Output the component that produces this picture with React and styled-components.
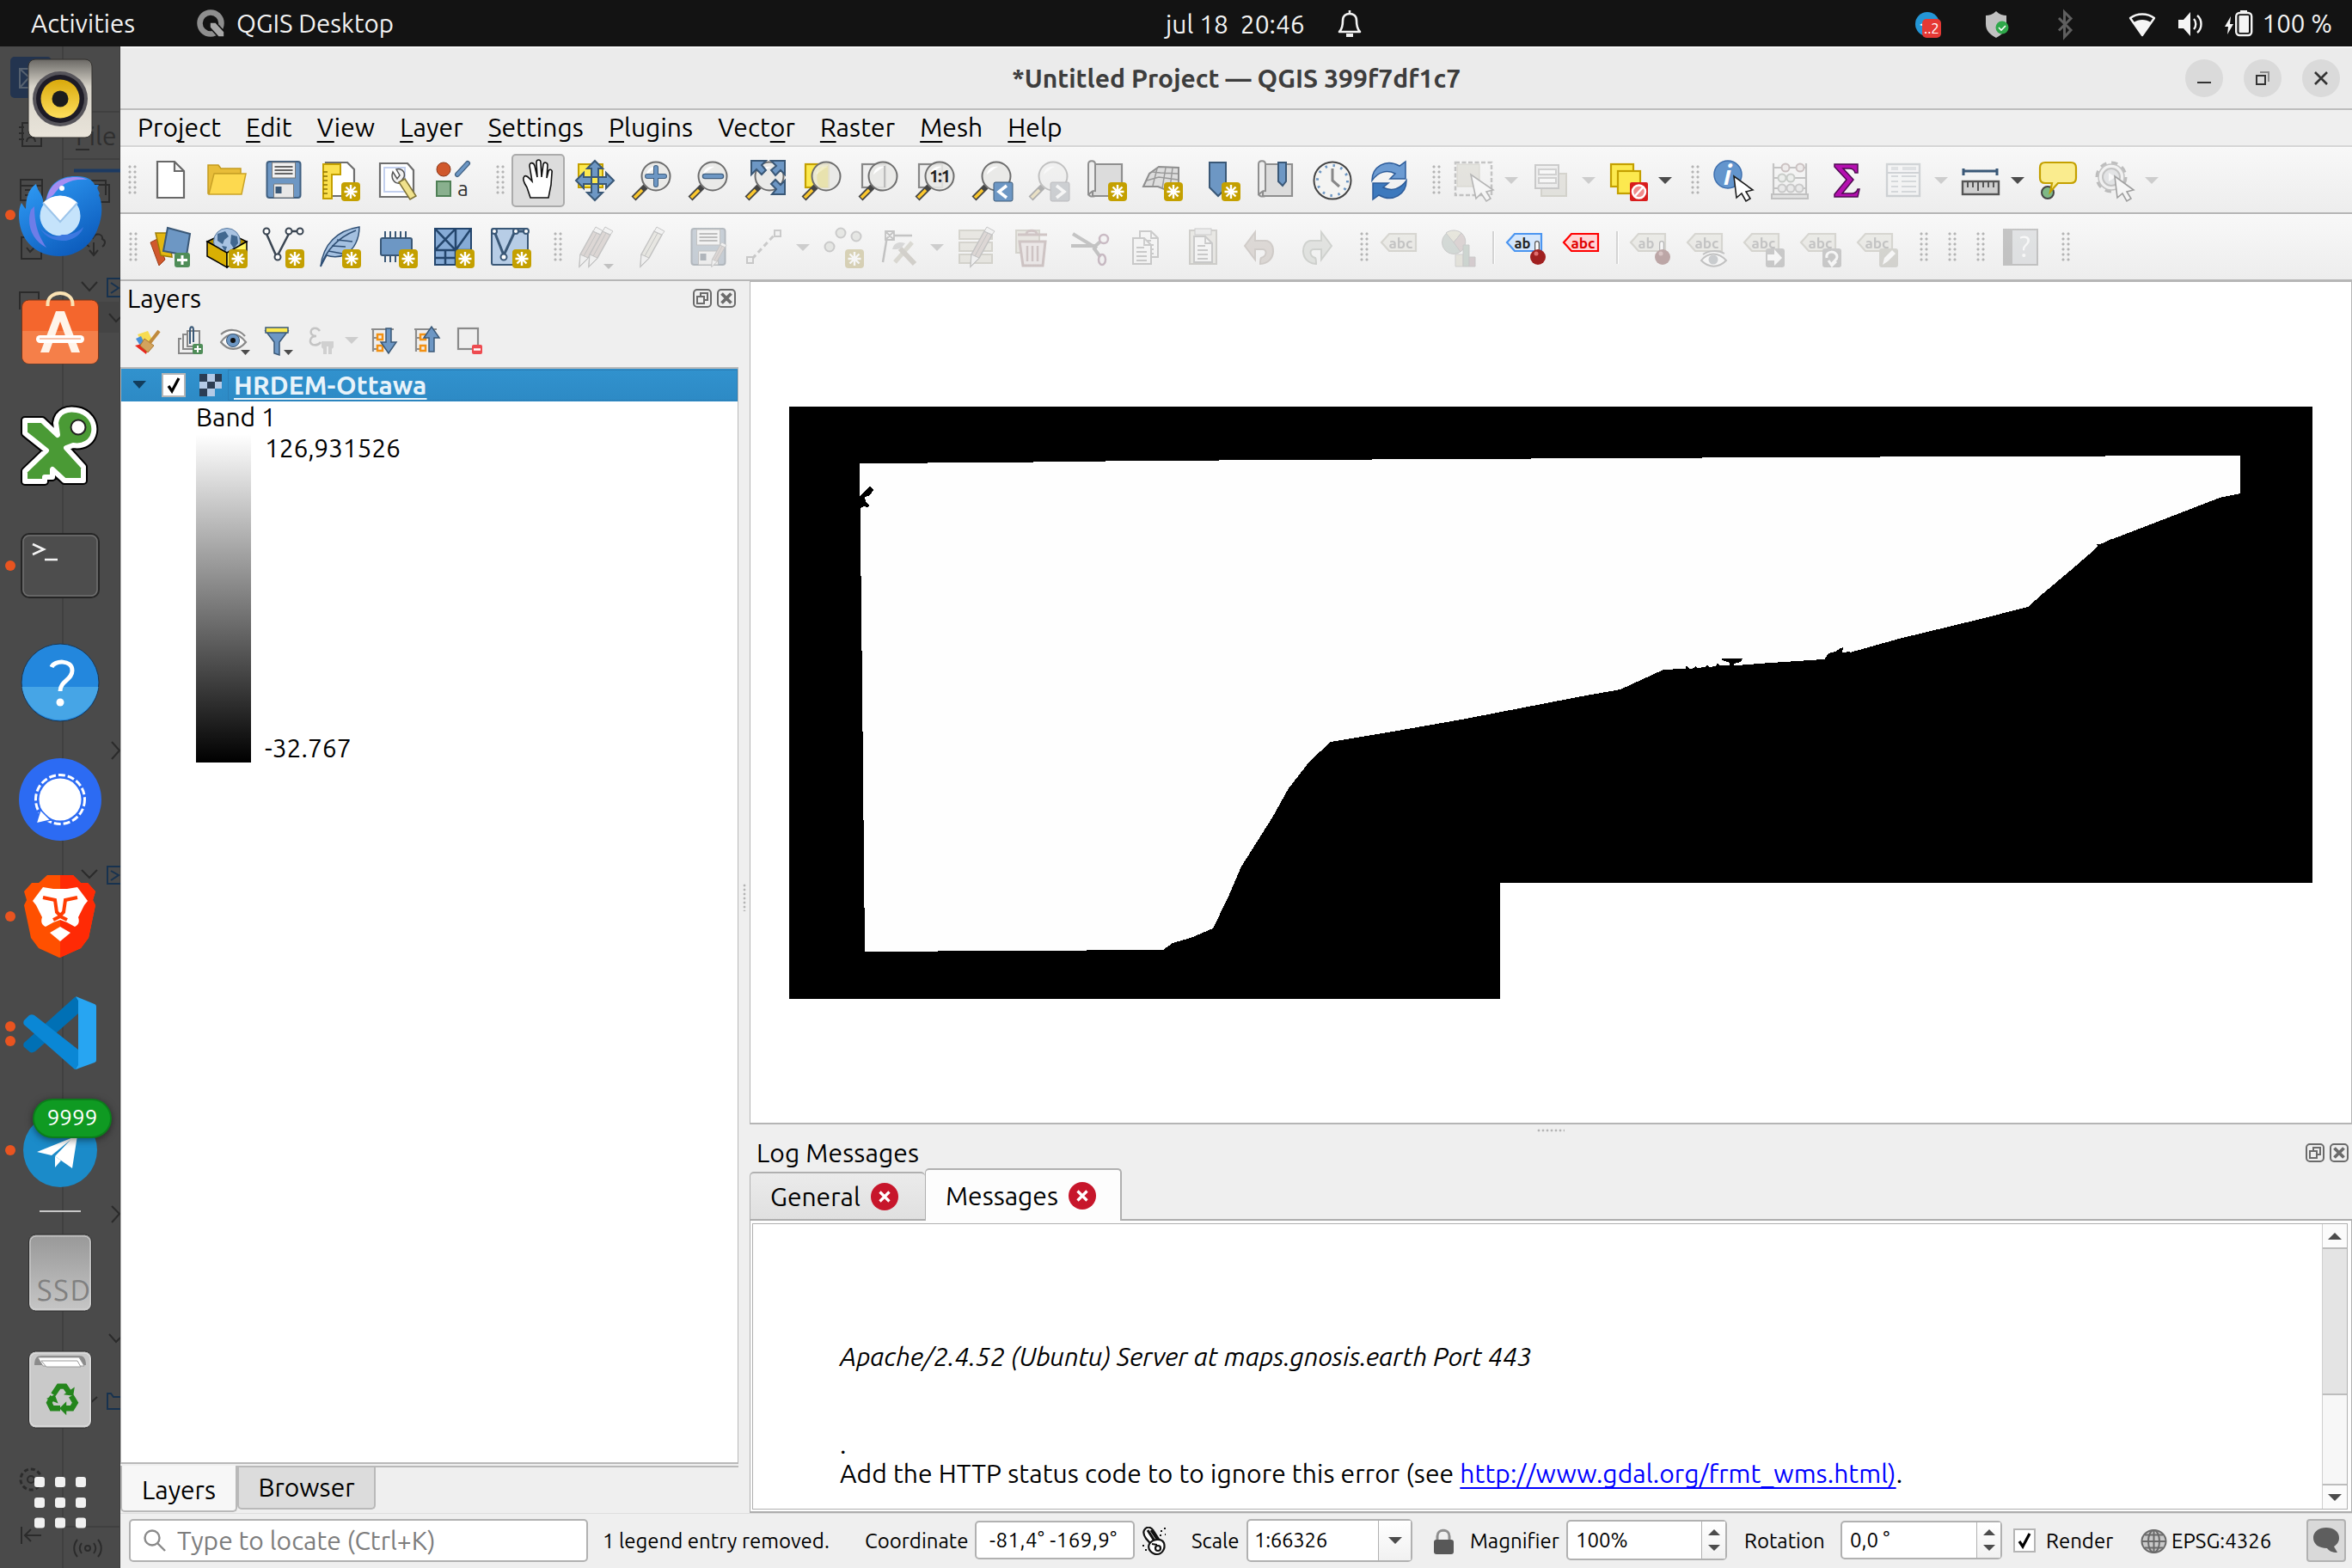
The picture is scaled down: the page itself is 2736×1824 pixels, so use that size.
import React from 'react';
import styled, { createGlobalStyle } from 'styled-components';

const Global = createGlobalStyle`
  * { box-sizing: border-box; }
  html, body { margin: 0; padding: 0; background: #efefef; overflow: hidden; }
  body, text { font-family: Ubuntu, "Open Sans", "Noto Sans", sans-serif; }
  svg { display: block; flex: none; }
`;

/* ---------- shared ---------- */
const Text = styled.span`
  font-size: ${(p) => p.$size || 30}px;
  line-height: 36px;
  letter-spacing: ${(p) => p.$ls || 0}px;
  font-weight: ${(p) => (p.$bold ? 700 : 400)};
  font-style: ${(p) => (p.$italic ? 'italic' : 'normal')};
  color: ${(p) => p.$color || '#000'};
  white-space: pre;
  flex: none;
  u { text-decoration-thickness: 2px; text-underline-offset: 5px; text-decoration-skip-ink: none; }
`;
const Screen = styled.div`
  width: 2736px; height: 1824px; display: flex; flex-direction: column; overflow: hidden;
`;
const Body = styled.div`flex: 1; display: flex; min-height: 0;`;

/* ---------- top bar ---------- */
const TopBar = styled.header`
  height: 54px; background: #131313; display: grid; grid-template-columns: 1356px 1fr auto;
  align-items: center; padding-top: 1px;
`;
const TopLeft = styled.div`display: flex; align-items: center; padding-left: 36px;`;
const TopMid = styled.div`display: flex; align-items: center; gap: 37px;`;
const TopRight = styled.div`display: flex; align-items: center; padding-right: 23px;`;
const AppMenu = styled.div`display: flex; align-items: center; gap: 13px; margin-left: 72px;`;

const Topbar = () => (
  <TopBar>
    <TopLeft>
      <Text $size={29.500} $color="#f2f2f2">Activities</Text>
      <AppMenu>
        <svg width="33" height="33" viewBox="0 0 33 33">
          <circle cx="16" cy="16" r="12.5" fill="none" stroke="#8e8e8e" strokeWidth="6.5" />
          <path d="M15 15h7l10 11v6h-7L15 21z" fill="#a8a8a8" stroke="#131313" strokeWidth="1.6" />
        </svg>
        <Text $size={29.500} $color="#f2f2f2">QGIS Desktop</Text>
      </AppMenu>
    </TopLeft>
    <TopMid>
      <Text $color="#f2f2f2">jul 18  20:46</Text>
      <svg width="30" height="34" viewBox="0 0 30 34" fill="none" stroke="#f2f2f2" strokeWidth="2.6">
        <path d="M3 26h24c-3-3-4-6-4-13 0-6-4-8-8-8s-8 2-8 8c0 7-1 10-4 13zM15 1v4" strokeLinejoin="round" />
        <path d="M11 30h8" strokeWidth="4" />
      </svg>
    </TopMid>
    <TopRight>
      <svg width="404" height="40" viewBox="2228 7 404 40">
        <circle cx="2242" cy="27" r="14" fill="#2496d6" />
        <path d="M2233 28l9-5-3 7z" fill="#fff" />
        <rect x="2236" y="21" width="22" height="22" rx="5" fill="#e53935" />
        <text x="2238" y="38" fontSize="17" fill="#fff">..2</text>
        <path d="M2322 12c4 4 8 5 12 5v10c0 8-5 12-12 16-7-4-12-8-12-16V17c4 0 8-1 12-5z" fill="#c1c1c1" />
        <circle cx="2329" cy="31" r="7.5" fill="#2fa84a" />
        <path d="M2325 31l3 3 5-5" fill="none" stroke="#fff" strokeWidth="1.6" />
        <path d="M2395 20l14 14-7.5 8V13l7.5 7.5-14 14" fill="none" stroke="#5f5f5f" strokeWidth="3" />
        <path d="M2478 20c8-6 20-6 28 0l-14 20z" fill="none" stroke="#f5f5f5" strokeWidth="2.4" strokeLinejoin="round" />
        <path d="M2482 25c6-4 14-4 20 0l-10 15z" fill="#f5f5f5" />
        <path d="M2534 22h6l8-9v28l-8-9h-6z" fill="#f5f5f5" />
        <path d="M2552 21c3 3 3 9 0 12M2556 17c6 5 6 15 0 20" fill="none" stroke="#f5f5f5" strokeWidth="2.4" />
        <path d="M2595 18l-7 12h4l-1 9 7-12h-4z" fill="#f5f5f5" />
        <rect x="2601.2" y="14" width="18" height="26" rx="4" fill="none" stroke="#f5f5f5" strokeWidth="2.4" />
        <rect x="2604.5" y="17" width="11.5" height="20" rx="1" fill="#f5f5f5" />
        <rect x="2606" y="11" width="8" height="3" fill="#f5f5f5" />
      </svg>
      <Text $size={29.500} $color="#f2f2f2">100 %</Text>
    </TopRight>
  </TopBar>
);

/* ---------- dock ---------- */
const DockBar = styled.nav`
  width: 140px; background: #4a4a4a; position: relative; display: flex; flex-direction: column; flex: none;
  border-right: 1px solid #3e3e3e;
`;
const Backdrop = styled.svg`position: absolute; left: 0; top: 0;`;
const DockItem = styled.div`
  position: relative; width: 140px; height: ${(p) => p.$h || 136}px; flex: none;
  display: flex; align-items: flex-end;
`;
const Dots = styled.div`
  position: absolute; left: 6px; top: 0; bottom: 0; display: flex; flex-direction: column;
  justify-content: center; gap: 5px;
`;
const Dot = styled.i`width: 12px; height: 12px; border-radius: 50%; background: #e95420;`;
const DockRule = styled.hr`width: 48px; height: 2px; margin: 2px 46px; border: 0; background: #c8c8c8; position: relative; flex: none;`;
const Count = styled.span`
  position: absolute; left: 38px; top: 8px; width: 92px; height: 46px; border-radius: 23px;
  background: #0f9a22; border: 2px solid #0b7d1b; color: #fff; font-size: 26px; line-height: 40px;
  text-align: center; box-shadow: 0 2px 8px rgba(0,0,0,.5);
`;

const dockIcons = [
  { dots: 0, art: <>
    <defs><linearGradient id="rb" x2="0" y2="1"><stop offset="0" stopColor="#6a6864" /><stop offset=".35" stopColor="#d8d4ca" /><stop offset="1" stopColor="#e9e4da" /></linearGradient>
      <linearGradient id="rby" x2="0" y2="1"><stop offset="0" stopColor="#d9a90c" /><stop offset="1" stopColor="#ffdf5c" /></linearGradient></defs>
    <rect x="33" y="23" width="74" height="91" rx="8" fill="url(#rb)" stroke="#33312e" strokeWidth="1" />
    <circle cx="70" cy="69" r="32" fill="#56545a" /><circle cx="70" cy="69" r="28" fill="#1d1b26" />
    <circle cx="70" cy="69" r="22.5" fill="url(#rby)" /><circle cx="70" cy="69" r="9.5" fill="#1c1c1c" />
  </> },
  { dots: 1, art: <>
    <defs><linearGradient id="tb" x1=".2" x2=".8" y2="1"><stop offset="0" stopColor="#2f9bf5" /><stop offset="1" stopColor="#0a57b8" /></linearGradient></defs>
    <path d="M54 48C58 30 72 22 90 23c10 0 18 4 20 10h5c-2 3-2 4-1 6l2 4-1 2c5 10 4 26-1 38-7 20-24 33-45 33C42 116 22 98 22 68c0-6 1-10 3-14 2 3 3 5 5 7 0-14 4-24 12-29 2 10 10 13 8 25z" fill="url(#tb)" />
    <path d="M54 50C58 32 70 24 88 24c6 0 10 1 14 3-20-2-32 6-40 18z" fill="#a48df2" />
    <path d="M36 62c-6 18 2 36 18 44-8-12-14-24-14-48z" fill="#6d7de8" />
    <circle cx="70" cy="69" r="23.5" fill="#c5e3fb" /><path d="M50 54l20 22 20-22c-10-11-30-11-40 0z" fill="#fff" />
    <path d="M50 54l20 22 20-22" fill="none" stroke="#9cc4ea" strokeWidth="2" />
    <path d="M47 84c8 14 22 14 30 14 10-2 18-8 20-16-8 8-16 9-25 9-6 4-16 2-25-7z" fill="#3d78e0" />
    <circle cx="72" cy="37" r="3" fill="#fff" />
  </> },
  { dots: 0, art: <>
    <rect x="25.500" y="31" width="89" height="74" rx="8" fill="#f4662d" stroke="#7a3519" /><path d="M26 67h88v30a8 8 0 0 1-8 8H34a8 8 0 0 1-8-8z" fill="#f57f49" />
    <path d="M55.500 38v-3c1-16 28-16 29 0v3" fill="none" stroke="#fbe3b4" strokeWidth="4" />
    <path d="M65 44h10l18 48H83L70 56 57 92H47z" fill="#fff4ea" /><rect x="42" y="72" width="56" height="9" rx="4.500" fill="#fff" /><path d="M46 76h48" stroke="#f3b193" strokeWidth="1.500" />
  </> },
  { dots: 0, art: <>
    <g transform="translate(23 20)">
      <path d="M6 15h20l18 17-2-14C44 4 56 1 66 3c14 2 22 14 20 26C84 40 74 46 62 44l-8 3 20 22v16H52L38 72v9h-9v5H6V74l25-24L6 30z" fill="#fff" stroke="#000" strokeWidth="10" strokeLinejoin="round" />
      <path d="M6 15h20l18 17-2-14C44 4 56 1 66 3c14 2 22 14 20 26C84 40 74 46 62 44l-8 3 20 22v16H52L38 72v9h-9v5H6V74l25-24L6 30z" fill="#4a9a35" stroke="#fff" strokeWidth="6" strokeLinejoin="round" />
      <circle cx="68" cy="23" r="8.500" fill="#fff" stroke="#222" strokeWidth="2" />
    </g>
  </> },
  { dots: 1, art: <>
    <rect x="25" y="31" width="90" height="74" rx="9" fill="#4d4d4d" stroke="#252525" strokeWidth="2" /><rect x="27" y="33" width="86" height="70" rx="7" fill="none" stroke="#6e6e6e" strokeWidth="1.500" />
    <path d="M38 43l13 6-13 6M52 61h15" fill="none" stroke="#f4f4f4" strokeWidth="2.500" />
  </> },
  { dots: 0, art: <>
    <circle cx="70" cy="68" r="45" fill="#2387dd" stroke="#1a3550" /><path d="M25.500 73a45 45 0 0 0 89 0z" fill="#46a5e6" />
    <path d="M60 50c3-8 24-9 24 4 0 11-14 12-14 24" fill="none" stroke="#fff" strokeWidth="5" /><circle cx="70" cy="91" r="4.500" fill="#fff" />
  </> },
  { dots: 0, art: <>
    <circle cx="70" cy="68" r="48" fill="#2c6bf3" /><circle cx="70" cy="68" r="28.500" fill="none" stroke="#fff" strokeWidth="3" strokeDasharray="8 3" />
    <circle cx="70" cy="68" r="24.500" fill="#fff" /><path d="M47 80l-5 16 17-4z" fill="#fff" stroke="#2c6bf3" strokeWidth="1.500" />
  </> },
  { dots: 1, art: <>
    <path d="M55 20h30l9 9h8l9 10-3 10 3 6-8 38-9 12-25 11-24-11-9-12-8-38 3-6-3-10 9-10h8z" fill="#ff5000" /><path d="M70 20h15l9 9h8l9 10-3 10 3 6-8 38-9 12-24 11z" fill="#ff2a05" />
    <path d="M50 34l12 2h16l12-2 12 16-4 5-7 14c2 6 0 9-4 11l-9-5-8-3-8 3-9 5c-4-2-6-5-4-11l-7-14-4-5z" fill="#fff" />
    <path d="M50 46l14 3 2 14 4 4 4-4 2-14 14-3M62 72l8-4 8 4" fill="none" stroke="#ff3d03" strokeWidth="4" /><path d="M58 87l12-7 12 7-12 10z" fill="#fff" />
  </> },
  { dots: 2, art: <>
    <path d="M28 84l7 6c2 1 4 0 6-1l50-44V26L87 26 28 79c-1 1-1 4 0 5z" fill="#0070b5" /><path d="M28 53l6-6c2-1 4-1 6 0l51 40v22l-4 1L28 58c-1-1-1-4 0-5z" fill="#0a87d5" />
    <path d="M88 25l22 9c2 1 2 2 2 4v60c0 2 0 3-2 4l-22 8 3-5V30z" fill="#27a5f2" />
  </> },
  { dots: 1, count: '9999', art: <>
    <circle cx="70" cy="68" r="43" fill="#1b8bc9" /><path d="M43 70l47-19-6 38-20-14 18-19-22 18z" fill="#fff" /><path d="M64 75v13l7-8z" fill="#fff" />
  </> },
];

const DockArt = ({ h = 136, children }) => (
  <svg width="140" height={h} viewBox={`0 ${136 - h} 140 ${h}`}>{children}</svg>
);

const Dock = () => (
  <DockBar>
    <Backdrop width="140" height="1770" viewBox="0 54 140 1770" fill="none" stroke="#2b2b2b" strokeWidth="2">
      <path d="M73 54v1770" stroke="#404040" strokeWidth="2" />
      <rect x="74" y="351" width="66" height="36" fill="#444" stroke="none" />
      <path d="M74 130h66M74 185h66M74 1776h66" stroke="#404040" />
      <rect x="12" y="66" width="48" height="48" rx="5" fill="#23344f" stroke="none" />
      <path d="M23 80h26v22H23zM23 80l13 12 13-12M23 102l10-11M49 102l-10-11" stroke="#56616f" />
      <text x="88" y="169" fontSize="30" fill="#2f2f2f" stroke="none">File</text>
      <path d="M88 174h16" />
      <path d="M86 198.500h54" stroke="#1c3a62" strokeWidth="4" />
      <path d="M26 143h22v27H26zM22 148h6M22 155h6M22 162h6M31 165c0-7 10-7 10 0" />
      <path d="M24 209h25v24H24zM24 216h25M29 221h16M29 227h12" />
      <path d="M25 276h23v25H25zM31 288l4 5 8-8" />
      <path d="M23 360v-20h22v8M30 350h20v14H30" />
      <path d="M106 210h17v17M110 215h17v20h-18" />
      <path d="M104 287c-7-4-2-12 4-10 4-8 12-4 11 1 5 2 3 7 0 9M109 282v14M104 291l5 6 5-6" />
      <path d="M95 328l9 10 9-10M127 365l8 9 5-5M130 863l9 10-9 10M95 1012l9 9 9-9M130 1403l9 9-9 10M127 1552l8 9 5-5M104 1633l9-8" />
      <path d="M140 324h-15v21h15M129 329l9 6-9 6M140 1008h-15v20h15M129 1013l9 5-9 6M140 1625h-8l-3-4h-4v18h15" stroke="#17324f" />
      <circle cx="36" cy="1721" r="12" strokeDasharray="5 3" strokeWidth="3" /><circle cx="36" cy="1721" r="4" />
      <path d="M25 1776v20M29 1786h19M36 1779l-7 7 7 7" />
      <circle cx="102" cy="1801" r="3" /><path d="M95 1795c-3 4-3 8 0 12M109 1795c3 4 3 8 0 12M90 1791c-5 6-5 14 0 20M114 1791c5 6 5 14 0 20" />
    </Backdrop>
    {dockIcons.map((d, i) => (
      <DockItem key={i} $h={i === 0 ? 128 : 136}>
        <DockArt h={i === 0 ? 128 : 136}>{d.art}</DockArt>
        {d.dots > 0 && <Dots>{Array.from({ length: d.dots }, (_, k) => <Dot key={k} />)}</Dots>}
        {d.count && <Count>{d.count}</Count>}
      </DockItem>
    ))}
    <DockRule />
    <DockItem><DockArt>
      <defs><linearGradient id="ssd" x2="0" y2="1"><stop offset="0" stopColor="#989898" /><stop offset="1" stopColor="#c6c6c6" /></linearGradient></defs>
      <rect x="33.500" y="24" width="73" height="89" rx="8" fill="url(#ssd)" stroke="#2c2c2c" /><rect x="35" y="26" width="70" height="85" rx="7" fill="none" stroke="#d4d4d4" />
      <text x="43" y="101" fontSize="33" fill="#808080" textLength="62">SSD</text>
    </DockArt></DockItem>
    <DockItem><DockArt>
      <rect x="33.500" y="24" width="73" height="89" rx="8" fill="#c9c9c9" stroke="#2c2c2c" /><rect x="35" y="26" width="70" height="85" rx="7" fill="none" stroke="#e4e4e4" />
      <path d="M40 40c0-8 3-11 8-11h44c5 0 8 3 8 11z" fill="#8b8b8b" /><path d="M44 31h48l6 10H50z" fill="#fff" stroke="#999" /><path d="M48 35h42l4 7H54z" fill="#fff" stroke="#999" />
      <g transform="translate(70 79) scale(.8) translate(-68 -80)">
        <g fill="none" stroke="#24851c" strokeWidth="8"><path d="M58 74l8-12h9l6 9M84 76l6 10-5 8H75M68 94H56l-4-8 5-9" /></g>
        <path d="M73 74l14 2 2-13zM77 84v20l-10-10zM48 80l12-6 5 13z" fill="#24851c" />
      </g>
    </DockArt></DockItem>
    <DockItem><DockArt>
      {[34, 58, 81.500].map((y) => [40, 64, 88].map((x) => <rect key={`${x}-${y}`} x={x} y={y} width="12" height="12" rx="3" fill="#f1f1f1" />))}
    </DockArt></DockItem>
  </DockBar>
);

/* ---------- toolbar icons (48 x 48) ---------- */
const Star = ({ x = 26, y = 26 }) => (
  <g transform={`translate(${x} ${y})`}>
    <rect width="22" height="22" rx="4" fill="#c4a000" />
    <path d="M11 3v16M3.500 11h15M5.500 5.500l11 11M16.500 5.500l-11 11" stroke="#fff" strokeWidth="2.400" />
  </g>
);
const Lens = ({ children, back }) => (
  <>
    {back}
    <path d="M17 31L3 45" stroke="#444" strokeWidth="7" /><path d="M13 35L4 44" stroke="#fcc82d" strokeWidth="3.500" />
    <circle cx="29" cy="19" r="16.500" fill="#e8e8e6" fillOpacity=".88" stroke="#6e6e6e" strokeWidth="2" />
    <path d="M18 17c1-7 7-10 13-9-5 2-9 6-13 9z" fill="#fff" />
    {children}
  </>
);
const Tag = ({ c = '#aaa688', f = '#dedbc8', t = 'abc', tc = '#777' }) => (
  <>
    <path d="M1 19L10 9h31v20H10z" fill={f} stroke={c} strokeWidth="2.200" />
    <text x="9.500" y="25.500" fontSize="17" fontWeight="700" fontFamily="Liberation Sans" textLength={t.length > 2 ? 28 : 19} lengthAdjust="spacingAndGlyphs" fill={tc}>{t}</text>
  </>
);
const Pencil = ({ x = 0, c = '#c9a79a' }) => (
  <g transform={`translate(${x} 0)`}><path d="M12 32L27 5l9 4-15 27-10 10z" fill={c} stroke="#777" strokeWidth="1.500" /><path d="M27 5l3-5 9 5-3 4zM12 32l9 4-10 10z" fill="#eee" stroke="#777" /><path d="M16 34L31 7" stroke="#777" /></g>
);
const Cursor = () => <path d="M24 18l3 25 6-5 5 9 5-3-5-8 8-2z" transform="translate(0 1)" fill="#fff" stroke="#1d1d1d" strokeWidth="1.600" />;
const Pin = () => <><path d="M37 20v10" stroke="#555" strokeWidth="6" strokeLinecap="round" /><path d="M37 20v10" stroke="#fff" strokeWidth="3.500" strokeLinecap="round" /><circle cx="38" cy="36" r="9" fill="#a02020" /><circle cx="36" cy="32" r="2.500" fill="#e07070" /></>;
const Floppy = () => <g transform="translate(1.500 0)"><rect x="4" y="2" width="39" height="42" rx="3" fill="#6d97c4" stroke="#3f5f80" strokeWidth="2" /><rect x="10" y="3" width="27" height="18" fill="#f1f1f1" stroke="#777" /><path d="M13 8h21M13 12h21M13 16h21" stroke="#666" strokeWidth="1.800" /><rect x="12" y="28" width="23" height="16" rx="1" fill="#e8e8e8" stroke="#777" /><rect x="14" y="31" width="7" height="8" fill="#3a5877" /></g>;
const Page = () => <path d="M8 3h25l8 8v31H8z" fill="#fff" stroke="#6e6e6e" strokeWidth="2.200" />;
const Doc = ({ x, y }) => <g transform={`translate(${x} ${y})`}><path d="M1 1h13l8 8v22H1z" fill="#f6f6f6" stroke="#888" strokeWidth="2" /><path d="M14 1v8h8M5 12h9M5 17h12M5 22h12M5 27h12" fill="none" stroke="#888" strokeWidth="1.800" /></g>;
const Roll = () => <><path d="M8 5h34v37H8z" fill="#dcdcdc" stroke="#8f8f8f" strokeWidth="2.200" /><path d="M3 5c0-5 8-5 8 0v31c-4-1-5 3-8 4z" fill="#eee" stroke="#8f8f8f" strokeWidth="2" /><path d="M3 38c0 5 4 5 8 4" fill="none" stroke="#8f8f8f" strokeWidth="2" /></>;

const art = {
  newDoc: <path d="M9 2h20l11 11v31H9zM29 2v11h11" transform="translate(1 0)" fill="#fff" stroke="#686868" strokeWidth="2.200" />,
  open: <g transform="translate(1 0)"><path d="M2 6h12l3 4h23v6H10L4 39H2z" fill="#e8bd39" stroke="#c39a1e" strokeWidth="1.500" /><path d="M9 16h37l-5 24H3z" fill="#fdd94f" stroke="#c9a227" strokeWidth="1.500" /></g>,
  save: <Floppy />,
  layout: <><Page /><path d="M2 5h20v12H12v28H2z" transform="translate(3 0)" fill="#fbe04e" stroke="#c4a000" strokeWidth="2" /><path d="M5 14h5M5 19h5M5 24h5M5 29h5M5 34h5M5 39h5" stroke="#8a7000" strokeWidth="1.500" /><Star /></>,
  manager: <><path d="M5 4h32l7 8v31H5z" fill="#fff" stroke="#6e6e6e" strokeWidth="2.200" /><path d="M10 9h24v28H10z" fill="none" stroke="#c3d0ee" strokeWidth="2" /><path d="M20 14c-3 8 2 14 8 13l3-4 2-3c2-7-4-11-9-9l4 7-3 4z" fill="#f1f1f1" stroke="#555" strokeWidth="1.500" /><path d="M27 26l7-4 13 20-7 4z" fill="#f1e28c" stroke="#7d7034" strokeWidth="1.500" /></>,
  style: <><circle cx="13" cy="11" r="8" fill="#d0582c" stroke="#8b3a1b" /><path d="M29 17L41 4" stroke="#3f5f80" strokeWidth="6" strokeLinecap="round" /><path d="M29 17L41 4" stroke="#6d97c4" strokeWidth="3.500" strokeLinecap="round" /><rect x="5" y="25" width="16" height="17" fill="#89b08e" stroke="#4f8056" strokeWidth="2" /><text x="29" y="42" fontSize="25" fontFamily="Open Sans" fill="#333">a</text></>,
  hand: <path d="M14 45L10 33C6 27 5 22 7 20c3-2 6 3 9 6L13 8c0-5 5-4 6 0l3 13-1-17c0-4 5-4 5 0l1 17 2-15c1-3 5-2 5 1l-1 15 2-8c1-3 5-2 4 2l-1 14-3 15z" transform="translate(1 -1)" fill="#fff" stroke="#111" strokeWidth="1.600" />,
  pan: <><rect x="5" y="5" width="28" height="27" fill="#fce94f" stroke="#c4a000" strokeWidth="2" /><path d="M24 1l9 9h-5v10h-8V10h-5zM24 47l9-9h-5V28h-8v10h-5zM2 24l9-9v5h9v8h-9v5zM46 24l-9-9v5h-9v8h9v5z" fill="#6d97c4" stroke="#3a5877" strokeWidth="2" /></>,
  zoomIn: <Lens><path d="M29 9v20M19 19h20" stroke="#3f5f80" strokeWidth="6" strokeLinecap="round" /><path d="M29 9v20M19 19h20" stroke="#6d97c4" strokeWidth="4" strokeLinecap="round" /></Lens>,
  zoomOut: <Lens><path d="M20 19h19" stroke="#3f5f80" strokeWidth="6.500" strokeLinecap="round" /><path d="M20 19h19" stroke="#6d97c4" strokeWidth="4" strokeLinecap="round" /></Lens>,
  zoomFull: <Lens><path d="M8 1h17l-5 5 5 6-5 5-6-6-6 6zM31 1h16v16l-5-5-6 6-5-6 6-5zM47 40V24l-5 5-6-6-5 5 6 6-5 6z" fill="#6d97c4" stroke="#3a5877" strokeWidth="2" /></Lens>,
  zoomSel: <Lens back={<rect x="5" y="5" width="27" height="27" fill="#fce94f" stroke="#c4a000" strokeWidth="2.200" />}><path d="M31 7v25h-9c-5-5-5-18 0-23z" fill="#e6dc8a" opacity=".5" /></Lens>,
  zoomLayer: <Lens back={<rect x="5" y="5" width="27" height="27" fill="#eee" stroke="#888" strokeWidth="2.200" />}><path d="M31 7v25" stroke="#bbb" strokeWidth="2" /></Lens>,
  zoomNative: <Lens back={<rect x="5" y="5" width="27" height="27" fill="#eee" stroke="#888" strokeWidth="2.200" />}><text x="17" y="26" fontSize="20" fontWeight="700" fontFamily="Liberation Sans" fill="#222" textLength="25">1:1</text></Lens>,
  zoomLast: <Lens><rect x="26" y="26" width="22" height="22" rx="2" fill="#6d97c4" stroke="#3a5877" /><path d="M41 30l-9 7 9 7" fill="none" stroke="#fff" strokeWidth="3.500" /></Lens>,
  zoomNext: <Lens><rect x="26" y="26" width="22" height="22" rx="2" fill="#8b9aab" stroke="#667" /><path d="M33 30l9 7-9 7" fill="none" stroke="#fff" strokeWidth="3.500" /></Lens>,
  newMap: <g transform="translate(1 0)"><Roll /><Star /></g>,
  new3d: <><path d="M2 31L9 16l11-8 23 1v22l-12 5-12-5z" fill="#ddd" stroke="#8f8f8f" strokeWidth="2" /><path d="M6 24l14-4 22 3M12 14l10 1 20 1M18 10l-5 20M28 9l-4 24M36 9l-3 24" fill="none" stroke="#999" strokeWidth="1.500" /><Star /></>,
  bookmark: <g transform="translate(1 0)"><path d="M12 3h19v30l-9 9-10-10z" fill="#6d97c4" stroke="#3a5877" strokeWidth="2" /><Star /></g>,
  bookmarks: <g transform="translate(1 0)"><Roll /><path d="M26 3h9v22l-4 5-5-5z" fill="#6d97c4" stroke="#3a5877" strokeWidth="2" /></g>,
  clock: <><circle cx="24" cy="24" r="21.500" fill="#f4f4f2" stroke="#444" strokeWidth="2" /><circle cx="24" cy="24" r="17.500" fill="none" stroke="#6d97c4" strokeWidth="3" strokeDasharray="2.500 6.660" /><path d="M24 10v14l8 7" fill="none" stroke="#888" strokeWidth="3" /></>,
  refresh: <><path d="M4 24C4 8 20-2 36 7l7-5v20H25l6-6c-10-5-20-2-27 8z" fill="#6c9bd2" stroke="#2d5c9a" strokeWidth="1.500" /><path d="M44 24c0 16-16 26-32 17l-7 5V27h18l-6 5c10 5 20 2 27-8z" fill="#3d79bd" stroke="#2d5c9a" strokeWidth="1.500" /></>,
  select: <><rect x="2" y="3" width="42" height="38" fill="none" stroke="#777" strokeWidth="2.500" strokeDasharray="5 2.500" /><rect x="4" y="5" width="26" height="26" fill="#cfc9b0" stroke="#aaa37c" /><path d="M20 17l6 28 6-6 6 9 5-3-5-8 8-2z" fill="#fff" stroke="#555" strokeWidth="1.600" /></>,
  form: <><rect x="12" y="16" width="29" height="26" fill="#cfc9b0" stroke="#aaa37c" strokeWidth="2" /><rect x="5" y="6" width="27" height="27" fill="#e6e6e6" stroke="#888" strokeWidth="2" /><rect x="9" y="11" width="20" height="6" fill="#fff" stroke="#999" strokeWidth="2" /><rect x="9" y="21" width="20" height="6" fill="#fff" stroke="#999" strokeWidth="2" /></>,
  deselect: <g transform="translate(2 0)"><rect x="2" y="5" width="26" height="26" fill="#fce94f" stroke="#c4a000" strokeWidth="2.200" /><rect x="10" y="13" width="26" height="26" fill="#fce94f" stroke="#c4a000" strokeWidth="2.200" /><rect x="24" y="26" width="21" height="22" rx="2" fill="#d91c1c" /><circle cx="34.500" cy="37" r="7.500" fill="#f08b8b" stroke="#fff" strokeWidth="2.500" /><path d="M29 43l11-12" stroke="#fff" strokeWidth="2.500" /></g>,
  identify: <><circle cx="17" cy="17" r="16" fill="#6395cd" stroke="#3d6fae" strokeWidth="1.500" /><text x="12" y="29" fontSize="31" fontWeight="700" fontStyle="italic" fontFamily="Liberation Serif" fill="#fff">i</text><Cursor /></>,
  abacus: <g transform="translate(-1 0)"><path d="M5 4v36M43 4v36M5 9h38M5 21h38M5 33h38" stroke="#777" strokeWidth="2.200" /><rect x="3" y="40" width="42" height="5" fill="#ccc" stroke="#777" strokeWidth="2" /><g fill="#e8dcdc" stroke="#a06a6a" strokeWidth="2"><circle cx="19" cy="9" r="4.500" /><circle cx="36" cy="9" r="4.500" /></g><g fill="#dfe7df" stroke="#7c917c" strokeWidth="2"><circle cx="15" cy="21" r="4.500" /><circle cx="25" cy="21" r="4.500" /></g><g fill="#ddd" stroke="#888" strokeWidth="2"><circle cx="15" cy="33" r="4.500" /><circle cx="25" cy="33" r="4.500" /><circle cx="35" cy="33" r="4.500" /></g></g>,
  sigma: <path d="M10 5h27v10h-3c-1-4-3-5-7-5H20l12 13-13 16h11c4 0 6-2 7-5h2l-2 9H10v-3l14-17L10 8z" transform="translate(-1 0)" fill="#b50fb0" stroke="#4e0a50" strokeWidth="1.500" />,
  table: <g transform="translate(-1 0)"><rect x="5" y="5" width="38" height="37" fill="#f4f6f8" stroke="#8fa0b0" strokeWidth="2.400" /><path d="M5 15h38" stroke="#8fa0b0" strokeWidth="2" /><path d="M10 10h8M23 10h16" stroke="#b9c4ce" strokeWidth="4" /><path d="M10 19h8M22 19h17M10 25h8M22 25h17M10 31h8M22 31h17M10 37h8M22 37h17" stroke="#9fb0bf" strokeWidth="2" /></g>,
  ruler: <><path d="M3 10h40M4 7v8M43 7v8" transform="translate(0 3)" stroke="#3a5877" strokeWidth="3" /><rect x="3" y="25" width="42" height="15" fill="#cfcfcf" stroke="#555" strokeWidth="2.400" /><path d="M9 26v6M15 26v6M21 26v10M27 26v6M33 26v6M39 26v6" stroke="#555" strokeWidth="2" /></>,
  tip: <><circle cx="12" cy="38" r="7" fill="#7fb885" stroke="#444" strokeWidth="2" /><path d="M9 3h30c4 0 6 2 6 6v12c0 4-2 6-6 6H24l-9 10 2-10H9c-4 0-6-2-6-6V9c0-4 2-6 6-6z" fill="#faec8e" stroke="#c4a000" strokeWidth="2.200" /></>,
  gear: <><circle cx="20" cy="20" r="16" fill="#e6e6e6" stroke="#666" strokeWidth="5" strokeDasharray="7 5.500" /><circle cx="20" cy="20" r="15" fill="#eee" stroke="#777" strokeWidth="1.500" /><circle cx="20" cy="20" r="10" fill="#c4ccd4" stroke="#777" strokeWidth="2" /><path d="M17 15v10l8-5z" fill="#fff" /><Cursor /></>,

  addLayer: <><path d="M1 18l8-4 9 24-7 7z" fill="#d0582c" stroke="#9a3c18" /><path d="M7 7l16 0 3 28-13-2z" fill="#e3b711" stroke="#9c7c06" strokeWidth="1.500" /><path d="M21 1l26 7-4 25-27-5z" fill="#6d97c4" stroke="#3a5877" strokeWidth="2" /><rect x="29" y="30" width="18" height="17" rx="3" fill="#4f8d58" /><path d="M38 33v11M32 38.500h12" stroke="#fff" strokeWidth="3" /></>,
  geopackage: <><path d="M1 17l23-11 23 11-23 13z" fill="#b08d00" stroke="#000" strokeWidth="1.500" /><circle cx="24" cy="17" r="15.500" fill="#a9c3e2" stroke="#5a7ba1" /><path d="M13 8l9-3 4 6-5 4-2 5-6-4zM29 9l7 2 1 8-5 6-4-6zM18 22l6 1-2 6z" fill="#41678f" /><path d="M1 17l23 13v17L1 34z" fill="#d9b003" stroke="#000" strokeWidth="1.500" /><path d="M24 30l23-13v17L24 47z" fill="#fff45e" stroke="#000" strokeWidth="1.500" /><Star /></>,
  vector: <><path d="M5 8l11 25M18 33L31 8M32 5h9" transform="translate(-1 0)" stroke="#3a4552" strokeWidth="2.500" fill="none" /><g fill="#fff" stroke="#3a4552" strokeWidth="2"><circle cx="4" cy="5" r="3.500" /><circle cx="17" cy="35" r="3.500" /><circle cx="30" cy="5" r="3.500" /><circle cx="43" cy="5" r="3.500" /></g><Star /></>,
  feather: <><path d="M1 46C4 20 20 4 46 0c0 14-6 26-16 32-8 4-17 3-22 1z" fill="#a4c0e0" stroke="#2f4f75" strokeWidth="1.500" /><path d="M1 46C8 26 22 12 42 4M14 22l16 1M20 15l18 2M10 28l16 3" fill="none" stroke="#2f4f75" strokeWidth="1.600" /><Star /></>,
  chip: <><path d="M10 5v36M16 5v36M22 5v36M28 5v36M34 5v36" stroke="#3a5877" strokeWidth="2" /><rect x="5" y="13" width="36" height="20" rx="2" fill="#6d97c4" stroke="#3a5877" strokeWidth="2" /><Star /></>,
  mesh: <><rect x="2" y="2" width="42" height="42" fill="#86abd6" stroke="#24466d" strokeWidth="2" /><path d="M2 27h42M26 2v42M2 2l24 25L44 2M2 27L26 2M14 27v17M2 36h24" fill="none" stroke="#24466d" strokeWidth="2.500" /><Star /></>,
  virtual: <><rect x="2" y="2" width="42" height="42" rx="2" fill="#b7cde6" stroke="#3a5877" strokeWidth="2" /><path d="M5 5l11 28L29 5M31 5h11" fill="none" stroke="#3a5877" strokeWidth="3" /><g fill="#fff" stroke="#3a5877" strokeWidth="2"><circle cx="5" cy="5" r="3" /><circle cx="16" cy="35" r="3.500" /><circle cx="30" cy="5" r="3" /><circle cx="42" cy="5" r="3" /></g><Star /></>,
  pencils: <g transform="translate(2 0)"><Pencil x={-8} /><Pencil x={3} /><path d="M31 43h12l-6 6z" fill="#777" /></g>,
  pencil: <Pencil c="#d8d4b8" x={-1} />,
  saveEdit: <g transform="translate(-2 0)"><Floppy /><g transform="translate(22 18) scale(.62)"><Pencil /></g></g>,
  line: <><path d="M8 37L35 8" stroke="#888" strokeWidth="3" strokeDasharray="6 4" /><g fill="#eee" stroke="#888" strokeWidth="2"><rect x="2" y="35" width="7" height="7" /><rect x="34" y="4" width="7" height="7" /></g></>,
  points: <><g fill="#ccd4c4" stroke="#888" strokeWidth="2"><circle cx="21" cy="7" r="5.500" /><circle cx="39" cy="11" r="5.500" /><circle cx="8" cy="23" r="5.500" /></g><Star /></>,
  vertex: <><path d="M8 9v8L4 41M12 10h26" fill="none" stroke="#777" strokeWidth="2.500" /><path d="M7 5h10v10H7zM7 5l10 10M17 5L7 15" fill="#eee" stroke="#777" strokeWidth="1.800" /><path d="M18 41l20-23" stroke="#b9b28c" strokeWidth="5" /><path d="M24 25l17 18" stroke="#a9997c" strokeWidth="6" /><path d="M15 26c2-8 8-9 15-7l-5 6-5 1z" fill="#aaa" /></>,
  attrs: <><g fill="#d9d3b4" stroke="#aaa37c" strokeWidth="2"><rect x="4" y="4" width="38" height="10" /><rect x="4" y="18" width="38" height="10" /><rect x="4" y="32" width="38" height="10" /></g><g transform="translate(6 0)"><Pencil /></g></>,
  trash: <><rect x="4" y="4" width="27" height="26" fill="#d9d3b4" stroke="#aaa37c" strokeWidth="2" /><path d="M8 17h30l-3 28H12zM6 9h34M16 8c0-5 12-5 12 0" fill="#e9d4d4" stroke="#b07474" strokeWidth="3" /><path d="M17 22v18M23 22v18M29 22v18" stroke="#b07474" strokeWidth="2.500" /></>,
  cut: <><path d="M4 8l28 17M2 22l30 0M28 24l8-7M28 24l8 11" stroke="#777" strokeWidth="4" fill="none" /><ellipse cx="40" cy="14" rx="5" ry="5" fill="none" stroke="#a58" strokeWidth="2.500" /><ellipse cx="38" cy="38" rx="4" ry="6" fill="none" stroke="#a58" strokeWidth="2.500" /></>,
  copy: <><Doc x={15} y={4} /><Doc x={7} y={12} /></>,
  paste: <><rect x="8" y="4" width="31" height="39" fill="#d8d4c0" stroke="#999480" strokeWidth="2" /><rect x="14" y="2" width="19" height="7" fill="#ddd" stroke="#888" /><Doc x={12} y={10} /></>,
  undo: <path d="M6 22L18 6v10h12c12 0 14 26-6 27 0-4 0-6 1-7 7-2 7-10 2-10h-9v12z" fill="#c4ac9a" stroke="#a58d7c" strokeWidth="2" />,
  redo: <path d="M42 22L30 6v10H18C6 16 4 42 24 43c0-4 0-6-1-7-7-2-7-10-2-10h9v12z" transform="translate(-1 0)" fill="#c2cabc" stroke="#94a08c" strokeWidth="2" />,
  tag: <g transform="translate(-1 -1)"><Tag /></g>,
  diagram: <><circle cx="18" cy="18" r="13.500" fill="#93b5a2" stroke="#888" /><path d="M18 18L9 7c5-4 13-4 18 0z" fill="#d8cf9c" stroke="#888" /><path d="M18 18L27 7c7 6 6 16-1 22z" fill="#c99a9a" stroke="#888" /><path d="M20 32h9v14h-9z" fill="#d3cba0" stroke="#999" /><path d="M29 21h7v25h-7z" fill="#7fae92" stroke="#888" /><path d="M36 35h7v11h-7z" fill="#c08a9a" stroke="#888" /></>,
  tagPin: <g transform="translate(0 -1)"><g transform="translate(1 0)"><Tag c="#4b95f0" f="#d5e7fc" t="ab" tc="#222" /></g><Pin /></g>,
  tagRed: <g transform="translate(1 -1)"><Tag c="#f00" f="#ffd6d6" tc="#e00000" /></g>,
  tagPinOff: <g transform="translate(1 -1)"><Tag t="ab" /><Pin /></g>,
  tagEye: <g transform="translate(1 -1)"><Tag /><path d="M17 40c8-10 20-10 29 0-9 9-20 9-29 0zM19 33c7-5 18-5 25-1" fill="#fff" stroke="#777" strokeWidth="2" /><circle cx="31" cy="39" r="5.500" fill="#8593a3" /></g>,
  tagMove: <g transform="translate(1 -1)"><Tag /><rect x="26" y="26" width="22" height="22" rx="3" fill="#888" /><path d="M28 33h8v-6l9 10-9 9v-6h-8z" fill="#fff" /></g>,
  tagRotate: <g transform="translate(1 -1)"><Tag /><rect x="26" y="26" width="22" height="22" rx="3" fill="#888" /><path d="M31 37c-2-9 12-9 12-1 0 4-5 4-6 9M33 40l4 6 5-5" fill="none" stroke="#fff" strokeWidth="3" /></g>,
  tagEdit: <g transform="translate(1 -1)"><Tag /><rect x="26" y="26" width="22" height="22" rx="3" fill="#a8a48c" /><path d="M30 45l2-8 9-9 4 4-9 9z" fill="#fff" /></g>,
  help: <g transform="translate(5 0)"><rect x="2" y="3" width="39" height="41" fill="#bcc6cf" stroke="#777" strokeWidth="2" /><rect x="3" y="4" width="9" height="39" fill="#777" /><text x="20" y="35" fontSize="33" fontFamily="Liberation Serif" fill="#fff">?</text></g>,
};

const WindowArea = styled.main`flex: 1; min-width: 0; display: flex; flex-direction: column; background: #efefef;`;
const Bar = styled.div`
  height: 78px; display: flex; align-items: center; flex: none; padding-left: ${(p) => p.$pad}px;
  background: linear-gradient(#f8f8f8, #ededed); border-bottom: 2px solid #b6b6b6; border-top: 1px solid #fcfcfc;
`;
const Slot = styled.button`
  width: 62px; height: 62px; margin: 0 2px; padding: 0; flex: none; display: grid; place-items: center;
  border-radius: 5px; border: 2px solid ${(p) => (p.$active ? '#ababab' : 'transparent')};
  background: ${(p) => (p.$active ? '#dcdcdc' : 'none')};
  svg { opacity: ${(p) => (p.$off ? 0.38 : 1)}; filter: ${(p) => (p.$off ? 'saturate(.45)' : 'none')}; overflow: visible; }
`;
const Grip = styled.i`
  width: 10px; height: 36px; margin: 0 ${(p) => (p.$first ? '5px 0 9px' : '6.500px 0 16.500px')}; flex: none;
  background: radial-gradient(circle at 2px 2px, #b4b4b4 1.300px, transparent 1.800px) 0 0 / 6px 6px;
`;
const Caret = styled.i`
  width: 23.500px; flex: none; display: flex; padding-left: 2px;
  &::after { content: ''; border: 8px solid transparent; border-top-color: ${(p) => (p.$off ? '#cdcdcd' : '#4c4c4c')}; border-bottom: 0; }
`;
const MiniCaret = styled(Caret)`margin-right: -4px;`;
const Divider = styled.i`width: 3px; height: 38px; margin: 0 3px 0 6px; background: #d4d4d4; border-right: 1px solid #fff; flex: none;`;

const row1 = 'G newDoc open save layout manager style g +hand pan zoomIn zoomOut zoomFull zoomSel zoomLayer zoomNative zoomLast -zoomNext newMap new3d bookmark bookmarks clock refresh g -select v -form v deselect V g identify -abacus sigma -table v ruler V tip -gear v'.split(' ');
const row2 = 'G addLayer geopackage vector feather chip mesh virtual g -pencils -pencil -saveEdit -line v -points -vertex v -attrs -trash -cut -copy -paste -undo -redo g -tag -diagram | tagPin tagRed | -tagPinOff -tagEye -tagMove -tagRotate -tagEdit g g g -help g'.split(' ');

const ToolRow = ({ items, pad = 0 }) => (
  <Bar $pad={pad}>
    {items.map((t, i) => {
      if (t === 'G') return <Grip key={i} $first />;
      if (t === 'g') return <Grip key={i} />;
      if (t === 'v' || t === 'V') return <Caret key={i} $off={t === 'v'} />;
      if (t === '|') return <Divider key={i} />;
      const name = t.replace(/^[-+]/, '');
      return (
        <Slot key={i} $off={t[0] === '-'} $active={t[0] === '+'}>
          <svg width="48" height="48" viewBox="0 0 48 48" fill="none">{art[name]}</svg>
        </Slot>
      );
    })}
  </Bar>
);

/* ---------- title + menu ---------- */
const TitleBar = styled.div`
  height: 74px; flex: none; display: grid; grid-template-columns: 1fr auto 1fr; align-items: center;
  background: #ebebeb; border-top: 2px solid #f8f8f8; border-bottom: 2px solid #bdbdbd; padding: 0 14px;
`;
const Controls = styled.div`display: flex; gap: 24px; justify-content: flex-end; grid-column: 3;`;
const Round = styled.button`
  width: 44px; height: 44px; border-radius: 50%; border: 0; padding: 0; background: #dadada;
  display: grid; place-items: center;
`;
const MenuBar = styled.div`
  height: 43px; flex: none; display: flex; align-items: center; gap: 29px; padding: 0 0 1px 20px;
  border-bottom: 2px solid #d6d6d6;
`;
const menus = [['Pro', 'j', 'ect'], ['', 'E', 'dit'], ['', 'V', 'iew'], ['', 'L', 'ayer'], ['', 'S', 'ettings'], ['', 'P', 'lugins'], ['Vect', 'o', 'r'], ['', 'R', 'aster'], ['', 'M', 'esh'], ['', 'H', 'elp']];

/* ---------- docks ---------- */
const Work = styled.div`flex: 1; min-height: 0; display: flex;`;
const LeftDock = styled.section`width: 719px; display: flex; flex-direction: column; flex: none;`;
const DockTitle = styled.div`
  height: ${(p) => p.$h}px; display: flex; align-items: center; gap: 6px; flex: none;
  padding: 0 ${(p) => p.$pr}px 0 ${(p) => p.$pl || 8}px;
  > :first-child { margin-right: auto; }
`;
const MiniTools = styled.div`height: 60px; display: flex; align-items: center; padding-left: 7px; flex: none; padding-bottom: 3px;`;
const MiniSlot = styled.div`width: 50px; display: grid; place-items: center; margin-right: ${(p) => p.$mr || 0}px; flex: none; svg { overflow: visible; }`;
const Tree = styled.div`flex: 1; background: #fff; border: 2px solid #b9b9b9; border-left-width: 1px; border-right-width: 1px; min-height: 0;`;
const LayerRow = styled.div`
  height: 38px; background: linear-gradient(#3192ce, #2d8ac5); display: flex; align-items: center; padding-left: 14px;
`;
const LayerName = styled.div`
  flex: 1; height: 36px; margin-left: 7px; padding-left: 6px; border: 1px solid #2b80b8; display: flex; align-items: center;
  span { text-decoration: underline; text-decoration-thickness: 2px; text-underline-offset: 4px; }
`;
const Check = styled.div`
  width: ${(p) => p.$w}px; height: 28px; background: #fff; border: 2px solid #b5b5b5; flex: none; display: grid; place-items: center;
`;
const Band = styled.div`padding-left: 87px; height: 36px;`;
const Legend = styled.div`display: flex; gap: 16px; padding: 2px 0 0 87px;`;
const Ramp = styled.div`width: 64px; height: 382px; background: linear-gradient(#fff, #000);`;
const RampLabels = styled.div`display: flex; flex-direction: column; justify-content: space-between; height: 385px; margin-top: -2px;`;
const LeftTabs = styled.div`display: flex; align-items: flex-start; height: 55px; margin-top: 2px; border-top: 2px solid #b9b9b9; flex: none;`;
const LeftTab = styled.div`
  width: ${(p) => p.$w}px; height: ${(p) => (p.$on ? 54 : 49)}px; margin-top: ${(p) => (p.$on ? -2 : 0)}px;
  background: ${(p) => (p.$on ? '#f7f7f7' : '#dcdcdc')}; border: 2px solid #b9b9b9; border-top: 0;
  border-radius: 0 0 5px 5px; display: grid; place-items: center; padding-top: ${(p) => (p.$on ? 3 : 0)}px; padding-bottom: ${(p) => (p.$on ? 0 : 1)}px;
`;

const Splitter = styled.div`
  flex: none; display: grid; place-items: center;
  width: ${(p) => (p.$v ? '13px' : 'auto')}; height: ${(p) => (p.$v ? 'auto' : '14px')};
`;
const SplitDots = styled.i`
  width: ${(p) => (p.$v ? 4 : 32)}px; height: ${(p) => (p.$v ? 32 : 4)}px;
  background: radial-gradient(circle at 2px 2px, #b4b4b4 1.200px, transparent 1.700px) 0 0 / 5px 5px;
`;
const Right = styled.section`flex: 1; min-width: 0; display: flex; flex-direction: column;`;
const Canvas = styled.div`height: 981px; background: #fff; border: 1px solid #b5b5b5; border-bottom-width: 2px; flex: none;`;
const Tabs = styled.div`display: flex; align-items: flex-end; height: 61px; flex: none; position: relative; margin-bottom: -2px;`;
const Tab = styled.div`
  width: ${(p) => p.$w}px; height: ${(p) => (p.$on ? 61 : 57)}px; display: flex; align-items: center; gap: 12px; flex: none;
  padding-left: 23px; border: 1px solid #b0b0b0; border-top-width: 2px; border-radius: 5px 5px 0 0;
  border-bottom: ${(p) => (p.$on ? '0' : '2px solid #adadad')}; border-right-width: ${(p) => (p.$on ? 2 : 0)}px;
  background: ${(p) => (p.$on ? '#fdfdfd' : 'linear-gradient(#ebebeb, #e0e0e0)')};
`;
const Pane = styled.div`
  flex: 1; min-height: 0; border: 1px solid #b0b0b0; border-top: 2px solid #adadad; border-bottom: 2px solid #adadad;
  background: #fdfdfd; padding: 3px 4px 2px 2px; display: flex;
`;
const LogView = styled.div`flex: 1; border: 1px solid #b0b0b0; background: #fff; display: flex;`;
const LogText = styled.div`flex: 1; padding: 136px 0 0 101px; display: flex; flex-direction: column;`;
const Line = styled.div`height: ${(p) => p.$h}px; display: flex;`;
const Link = styled(Text)`text-decoration: underline; text-decoration-thickness: 2px; text-underline-offset: 5px; text-decoration-skip-ink: none;`;
const Scroll = styled.div`width: 29px; display: flex; flex-direction: column; border-left: 1px solid #d0d0d0; background: #f7f7f7;`;
const ScrollBtn = styled.div`height: 27px; display: grid; place-items: center; background: #fbfbfb;`;
const Thumb = styled.div`height: 172px; background: #e4e4e4; border-top: 2px solid #bdbdbd; border-bottom: 2px solid #bdbdbd;`;
const Track = styled.div`flex: 1; border-bottom: 2px solid #bdbdbd;`;
const Tri = styled.i`
  width: 0; height: 0; border: ${(p) => p.$s || 6}px solid transparent;
  ${(p) => (p.$up ? 'border-bottom-color: #4c4c4c; border-top: 0;' : 'border-top-color: #4c4c4c; border-bottom: 0;')}
`;

/* ---------- status bar ---------- */
const Status = styled.footer`height: 64px; flex: none; display: flex; align-items: center; border-top: 1px solid #dedede; padding: 0 7px 2px 10px;`;
const Cell = styled.div`width: ${(p) => p.$w}px; flex: none; display: flex; align-items: center; padding-top: 3px;`;
const RenderCell = styled(Cell)`margin-left: 12px;`;
const Field = styled.div`
  width: ${(p) => p.$w}px; height: ${(p) => p.$h || 47}px; flex: none; background: #fff; border: 2px solid #b1b1b1; border-radius: 5px;
  display: flex; align-items: center; padding-left: ${(p) => p.$pl}px; margin-right: ${(p) => p.$mr || 0}px;
  > :first-child { margin-right: auto; }
`;
const SearchRow = styled.div`display: flex; align-items: center; gap: 13px;`;
const Stepper = styled.div`
  width: ${(p) => p.$w}px; height: 100%; border-left: 1px solid #b1b1b1; background: linear-gradient(#fff, #f1f1f1); flex: none;
  display: flex; flex-direction: column; align-items: center; justify-content: center; gap: 11px;
`;
const ChatBtn = styled.div`width: 46px; height: 50px; margin-left: auto; background: #d9d9d9; border: 2px solid #b1b1b1; border-radius: 4px; display: grid; place-items: center;`;

const Tick = () => <svg width="18" height="20" viewBox="0 0 18 20"><path d="M3 11l4 6 8-15" fill="none" stroke="#000" strokeWidth="3.200" /></svg>;
const DockButtons = () => (
  <>
    <svg width="22" height="22" viewBox="0 0 22 22" fill="none" stroke="#6b6b6b" strokeWidth="2"><rect x="1" y="1" width="20" height="20" rx="4" /><path d="M9 9V5h8v8h-4M5 9h8v8H5z" /></svg>
    <svg width="22" height="22" viewBox="0 0 22 22" fill="none" stroke="#6b6b6b" strokeWidth="2"><rect x="1" y="1" width="20" height="20" rx="4" /><path d="M5.500 5.500l11 11M16.500 5.500l-11 11" strokeWidth="3.800" /></svg>
  </>
);
const TabClose = () => <svg width="32" height="32" viewBox="0 0 32 32"><circle cx="16" cy="16" r="16" fill="#c7162b" /><path d="M10.500 10.500l11 11M21.500 10.500l-11 11" stroke="#fff" strokeWidth="3.200" /></svg>;
const Small = ({ children }) => <svg width="32" height="32" viewBox="0 0 32 32" fill="none">{children}</svg>;
const TreeLines = () => <><path d="M0 3h26M2 3v26M2 13h6M2 26h6" stroke="#8c8c8c" strokeWidth="2.200" /><rect x="7" y="9" width="6" height="6" stroke="#f29113" strokeWidth="2.500" /><rect x="7" y="22" width="6" height="6" stroke="#f29113" strokeWidth="2.500" /></>;

const LayersDock = () => (
  <LeftDock>
    <DockTitle $h={40} $pr={3}><Text>Layers</Text><DockButtons /></DockTitle>
    <MiniTools>
      <MiniSlot><Small><g transform="translate(1 2)"><path d="M3 7l12-4 5 10-8 10z" fill="#f7dc52" /><path d="M1 12l6-3 5 10-4 4z" fill="#4a8fd8" /><path d="M0 20l8-2 6 9-1 3z" fill="#e8261c" /><path d="M11 12l11 8-7 8-9-8z" fill="#d3a35d" stroke="#a8772f" /><path d="M17 17L28 3" stroke="#c08a3c" strokeWidth="4" /></g></Small></MiniSlot>
      <MiniSlot><Small><path d="M6 14H3v17h18M12 9H8v17h18M13 5h14v18H13z" transform="translate(-1 0)" stroke="#888" strokeWidth="2" /><path d="M15 20V4c0-5 4-5 4 0v14" stroke="#3a5877" strokeWidth="2" /><rect x="18" y="20" width="12" height="12" rx="2" fill="#4f8d58" /><path d="M24 22v8M20 26h8" stroke="#fff" strokeWidth="2" /></Small></MiniSlot>
      <MiniSlot><Small><path d="M1 18c8-12 20-12 29 0-9 11-21 10-29 0zM1 9c8-7 20-7 28 2" stroke="#888" strokeWidth="2.200" fill="#fff" fillOpacity=".6" /><circle cx="15" cy="16" r="7.500" fill="#6d97c4" stroke="#3a5877" /><circle cx="15" cy="16" r="3" fill="#111" /><path d="M24 27h11l-5.500 6z" fill="#4c4c4c" /></Small></MiniSlot>
      <MiniSlot><Small><path d="M3 5l10 13v13l6 2V18L29 5z" fill="#6d97c4" stroke="#3a5877" strokeWidth="1.500" /><rect x="3" y="1" width="26" height="6" fill="#fce94f" stroke="#3a5877" strokeWidth="1.500" /><path d="M24 27h11l-5.500 6z" fill="#4c4c4c" /></Small></MiniSlot>
      <MiniSlot $mr={2}><Small><path d="M16 5C12-1 4 2 6 8c1 2 3 3 6 3-8 0-9 8-4 10 4 1 7 0 9-3" stroke="#c4c4c4" strokeWidth="2.500" /><path d="M18 17h14v7l-2 2v6h-4v-9h-2v9h-4v-6l-2-2z" fill="#d0d0d0" /></Small></MiniSlot>
      <MiniCaret $off />
      <MiniSlot><Small><g transform="translate(4 0)"><TreeLines /><path d="M17 2h6v16h6L20 31l-9-13h6z" fill="#6d97c4" stroke="#3a5877" strokeWidth="1.500" /></g></Small></MiniSlot>
      <MiniSlot><Small><g transform="translate(4 0)"><TreeLines /><path d="M17 29h6V13h6L20 0l-9 13h6z" fill="#6d97c4" stroke="#3a5877" strokeWidth="1.500" /></g></Small></MiniSlot>
      <MiniSlot><Small><rect x="5" y="2" width="23" height="24" stroke="#8a8a8a" strokeWidth="2.200" /><rect x="21" y="21" width="12" height="11" rx="2" fill="#ee4b50" /><path d="M23 26.500h8" stroke="#fff" strokeWidth="2.500" /></Small></MiniSlot>
    </MiniTools>
    <Tree>
      <LayerRow>
        <svg width="33" height="10" viewBox="0 0 33 10"><path d="M-1 0h16L7 9z" fill="#123d5c" /></svg>
        <Check $w={28}><Tick /></Check>
        <svg width="42" height="26" viewBox="0 0 42 26">
          <g transform="translate(16 0)"><rect width="26" height="26" fill="#b4cae6" /><path d="M0 0h9v9H0zM18 0h8v9h-8zM9 9h9v8H9zM0 17h9v9H0z" fill="#2b3d54" /><path d="M18 17h8v9h-8z" fill="#2e8dc8" /></g>
        </svg>
        <LayerName><Text $bold $ls={0.15} $color="#e8f3fa">HRDEM-Ottawa</Text></LayerName>
      </LayerRow>
      <Band><Text>Band 1</Text></Band>
      <Legend>
        <Ramp />
        <RampLabels><Text $ls={-0.2}>126,931526</Text><Text>-32.767</Text></RampLabels>
      </Legend>
    </Tree>
    <LeftTabs>
      <LeftTab $w={136} $on><Text>Layers</Text></LeftTab>
      <LeftTab $w={161}><Text>Browser</Text></LeftTab>
    </LeftTabs>
  </LeftDock>
);

const MapView = () => (
  <Canvas>
    <svg width="1862" height="978" viewBox="873 329 1862 978" shapeRendering="crispEdges">
      <path d="M918 474H2690V1028H1745V1163H918z" fill="#000" />
      <path d="M1000 540L1160 539 1329 537 1506 536 1688 535 1878 534 2082 533 2293 532 2606 531V575L2582 580 2520 604 2455 629 2443 634 2430 646 2408 665 2377 691 2359 707 2300 722 2209 744 2145 762 2121 768 2060 772 1980 778 1935 780 1885 803 1840 811 1700 838 1620 852 1548 864 1524 886 1499 918 1480 952 1444 1009 1428 1046 1411 1081 1385 1092 1364 1098 1353 1106 1006 1108 1003 800z" fill="#fefefe" />
      <path d="M1000 578l6-6 6-5 4 4-4 6-6 2 1 6 4 4-2 2-4-1-6 3zM1960 781l2-6 3 4 6 0 1-3 3 2 8-1 3-3 2 3 8-1 2-4 2 3 12 0v-3l-9-3v-2h24l-2 4-8 2 1 4 9-1v6h-66zM2121 770l6-9 8-2 6-4 3-1-1 6 10-1-10 8zM2438 634h8l10-6 2 3-12 9z" fill="#000" />
    </svg>
  </Canvas>
);

const LogPanel = () => (
  <>
    <DockTitle $h={37} $pr={4}><Text $ls={0.1}>Log Messages</Text><DockButtons /></DockTitle>
    <Tabs>
      <Tab $w={204}><Text>General</Text><TabClose /></Tab>
      <Tab $w={229} $on><Text>Messages</Text><TabClose /></Tab>
    </Tabs>
    <Pane>
      <LogView>
        <LogText>
          <Line $h={102}><Text $italic>Apache/2.4.52 (Ubuntu) Server at maps.gnosis.earth Port 443</Text></Line>
          <Line $h={34}><Text>.</Text></Line>
          <Line $h={36}><Text $ls={0.12}>Add the HTTP status code to to ignore this error (see </Text><Link $color="#0000ff" $ls={0.08}>http://www.gdal.org/frmt_wms.html)</Link><Text>.</Text></Line>
        </LogText>
        <Scroll>
          <ScrollBtn><Tri $up $s={8} /></ScrollBtn>
          <Thumb />
          <Track />
          <ScrollBtn><Tri $s={8} /></ScrollBtn>
        </Scroll>
      </LogView>
    </Pane>
  </>
);

const StatusBar = () => (
  <Status>
    <Field $w={534} $h={50} $pl={15} $mr={17}>
      <SearchRow>
        <svg width="26" height="26" viewBox="0 0 26 26" fill="none" stroke="#8a8a8a" strokeWidth="2.400"><circle cx="10" cy="10" r="8.500" /><path d="M16 16l9 9" /></svg>
        <Text $color="#7d7d7d">Type to locate (Ctrl+K)</Text>
      </SearchRow>
    </Field>
    <Cell $w={305}><Text $size={24}>1 legend entry removed.</Text></Cell>
    <Cell $w={128}><Text $size={24}>Coordinate</Text></Cell>
    <Field $w={186} $pl={15} $h={45} $mr={8}><Text $size={24} $ls={0.5}>-81,4° -169,9°</Text></Field>
    <Cell $w={58}>
      <svg width="34" height="34" viewBox="0 0 34 34" fill="none" stroke="#111" strokeWidth="2.200"><path d="M3 4c3-5 8-4 11 1l7 11-7 6C8 18 0 10 3 4z" fill="#fff" /><path d="M7 4l9 14M11 4l8 12" strokeWidth="3" /><path d="M1 22h2M4 27h2M22 5h2M26 2h2M21 10h2M27 9h1" /><path d="M9 20c4-6 14-7 17-1 2 6-2 13-8 13-6 0-12-6-9-12z" fill="#fff" /><circle cx="19" cy="25" r="3" /><path d="M12 20l6 1" /></svg>
    </Cell>
    <Cell $w={64}><Text $size={24}>Scale</Text></Cell>
    <Field $w={193} $pl={7} $h={50} $mr={23}><Text $size={24} $ls={-0.3}>1:66326</Text><Stepper $w={38}><Tri $s={8} /></Stepper></Field>
    <Cell $w={44}><svg width="26" height="30" viewBox="0 0 26 30"><path d="M6 15V9c0-9 14-9 14 0v6" fill="none" stroke="#8e8e8e" strokeWidth="3" /><rect x="2" y="13" width="23" height="17" rx="3" fill="#585858" /></svg></Cell>
    <Cell $w={112}><Text $size={24}>Magnifier</Text></Cell>
    <Field $w={187} $pl={9} $mr={20}><Text $size={24}>100%</Text><Stepper $w={28}><Tri $up $s={7} /><Tri $s={7} /></Stepper></Field>
    <Cell $w={112}><Text $size={24}>Rotation</Text></Cell>
    <Field $w={188} $pl={9} $h={45} $mr={13}><Text $size={24}>0,0 °</Text><Stepper $w={28}><Tri $up $s={7} /><Tri $s={7} /></Stepper></Field>
    <Check $w={26}><Tick /></Check>
    <RenderCell $w={110}><Text $size={24}>Render</Text></RenderCell>
    <Cell $w={36}>
      <svg width="31" height="28" viewBox="0 0 31 28" fill="none" stroke="#6a6a6a" strokeWidth="2"><ellipse cx="15.500" cy="14" rx="14" ry="13" fill="#c9c9c9" /><ellipse cx="15.500" cy="14" rx="6.500" ry="13" /><path d="M15.500 1v26M2 14h27M5 6.500h21M5 21.500h21" /></svg>
    </Cell>
    <Cell $w={120}><Text $size={24}>EPSG:4326</Text></Cell>
    <ChatBtn><svg width="34" height="32" viewBox="0 0 34 32"><path d="M17 1c9 0 15 5 15 12 0 5-3 8-6 10l4 7c-6 0-10-2-12-5C8 25 2 20 2 13 2 6 8 1 17 1z" fill="#5e5e5e" /></svg></ChatBtn>
  </Status>
);

export default function App() {
  return (
    <Screen>
      <Global />
      <Topbar />
      <Body>
        <Dock />
        <WindowArea>
          <TitleBar>
            <i />
            <Text $bold $color="#3d3d3d">*Untitled Project — QGIS 399f7df1c7</Text>
            <Controls>
              <Round><svg width="18" height="18" viewBox="0 0 18 18"><path d="M1 14h16" stroke="#333" strokeWidth="2" /></svg></Round>
              <Round><svg width="18" height="18" viewBox="0 0 18 18" fill="none" strokeWidth="2"><path d="M6 2h10v11" stroke="#8d8d8d" /><rect x="2" y="6" width="10" height="10" stroke="#333" /></svg></Round>
              <Round><svg width="18" height="18" viewBox="0 0 18 18"><path d="M2 2l14 14M16 2L2 16" stroke="#333" strokeWidth="2.600" /></svg></Round>
            </Controls>
          </TitleBar>
          <MenuBar>
            {menus.map(([a, b, c]) => <Text key={a + b + c} $ls={0.09}>{a}<u>{b}</u>{c}</Text>)}
          </MenuBar>
          <ToolRow items={row1} />
          <ToolRow items={row2} pad={1} />
          <Work>
            <LayersDock />
            <Splitter $v><SplitDots $v /></Splitter>
            <Right>
              <MapView />
              <Splitter><SplitDots /></Splitter>
              <LogPanel />
            </Right>
          </Work>
          <StatusBar />
        </WindowArea>
      </Body>
    </Screen>
  );
}
